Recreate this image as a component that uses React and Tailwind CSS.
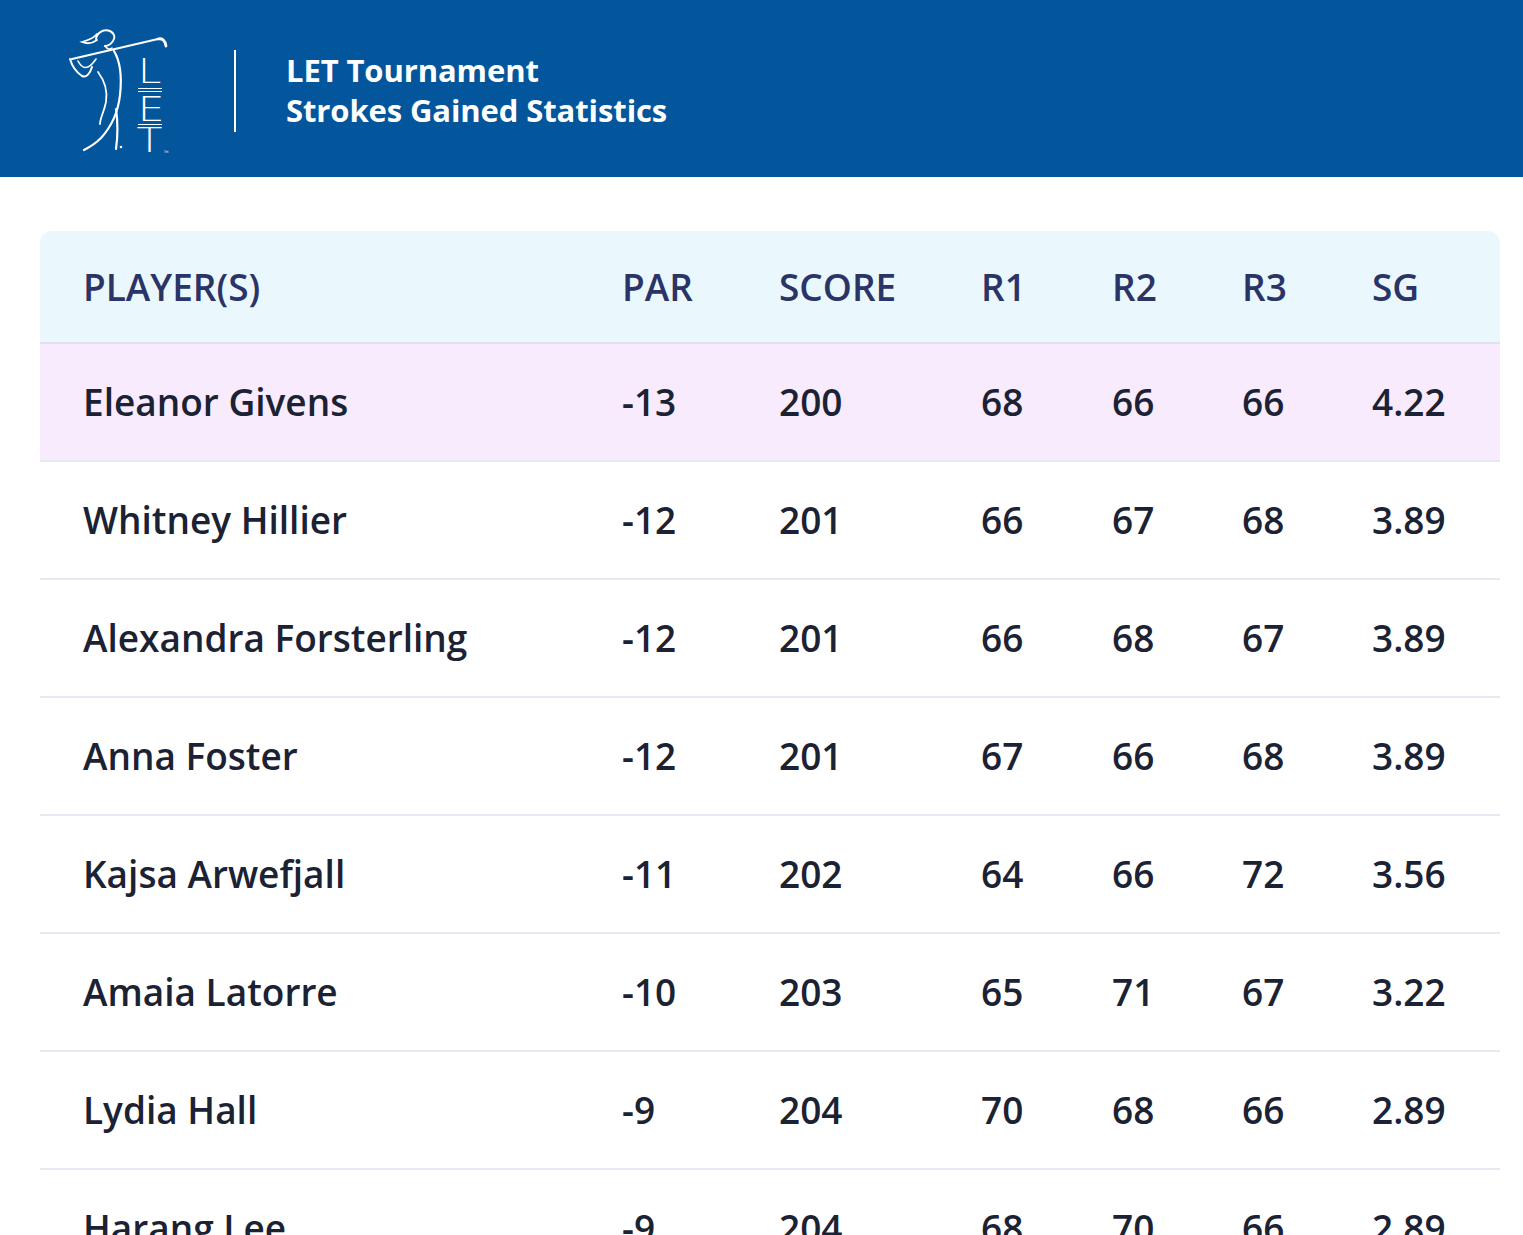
import React from "react";

const rows = [
  { name: "Eleanor Givens", par: "-13", score: 200, r1: 68, r2: 66, r3: 66, sg: "4.22", leader: true },
  { name: "Whitney Hillier", par: "-12", score: 201, r1: 66, r2: 67, r3: 68, sg: "3.89" },
  { name: "Alexandra Forsterling", par: "-12", score: 201, r1: 66, r2: 68, r3: 67, sg: "3.89" },
  { name: "Anna Foster", par: "-12", score: 201, r1: 67, r2: 66, r3: 68, sg: "3.89" },
  { name: "Kajsa Arwefjall", par: "-11", score: 202, r1: 64, r2: 66, r3: 72, sg: "3.56" },
  { name: "Amaia Latorre", par: "-10", score: 203, r1: 65, r2: 71, r3: 67, sg: "3.22" },
  { name: "Lydia Hall", par: "-9", score: 204, r1: 70, r2: 68, r3: 66, sg: "2.89" },
  { name: "Harang Lee", par: "-9", score: 204, r1: 68, r2: 70, r3: 66, sg: "2.89" },
];

const cols = "grid grid-cols-[539px_157px_202px_131px_130px_130px_1fr] items-center pl-[43px]";

// golfer + stacked L E T mark
const LetLogo = () => (
  <svg width="106" height="140" viewBox="0 0 106 140" fill="none" className="shrink-0">
    <path d="M6 34 L92 14" stroke="white" strokeWidth="2.2" strokeLinecap="round" />
    <path d="M92 14 C96 13 99 15 100 21" stroke="white" strokeWidth="2.8" strokeLinecap="round" />
    <path d="M30 14 C31 7 38 4 44 6 C48 8 50 12 47 16 C45 19 42 21 39 21" stroke="white" strokeWidth="2" strokeLinecap="round" />
    <path d="M31 9 C28 13 23 15 16 17 C21 19 27 18 31 15" stroke="white" strokeWidth="1.8" strokeLinecap="round" />
    <path d="M39 21 C41 24 44 25 46 23" stroke="white" strokeWidth="1.6" strokeLinecap="round" />
    <path d="M4 34 C6 41 10 47 16 51 C20 53 24 49 26 42" stroke="white" strokeWidth="2" strokeLinecap="round" />
    <path d="M12 36 C16 44 22 46 30 34" stroke="white" strokeWidth="1.6" strokeLinecap="round" />
    <path d="M48 26 C54 36 56 52 54 70 C52 88 45 102 35 113 C30 118 24 122 18 125" stroke="white" strokeWidth="2.2" strokeLinecap="round" />
    <path d="M32 47 C38 55 42 65 40 77 C38 87 34 93 34 99" stroke="white" strokeWidth="1.8" strokeLinecap="round" />
    <path d="M50 84 C52 98 52 110 50 124" stroke="white" strokeWidth="2.2" strokeLinecap="round" />
    <circle cx="55" cy="122" r="1.3" fill="white" />
    <g stroke="white" strokeWidth="1">
      <line x1="72" y1="63.5" x2="96" y2="63.5" />
      <line x1="72" y1="66.5" x2="96" y2="66.5" />
      <line x1="72" y1="99.5" x2="96" y2="99.5" />
    </g>
    <g fill="white" fontSize="34" style={{ fontFamily: "'DejaVu Sans', sans-serif", fontWeight: 200 }}>
      <text x="57.5" y="58" transform="scale(1.25 1)">L</text>
      <text x="57.5" y="96" transform="scale(1.25 1)">E</text>
      <text x="56.5" y="127" transform="scale(1.25 1)">T</text>
    </g>
    <text x="98" y="128" fill="white" fontSize="3" style={{ fontFamily: "'DejaVu Sans', sans-serif" }}>TM</text>
  </svg>
);

export default function App() {
  return (
    <div className="min-h-screen bg-white" style={{ fontFamily: "'Open Sans', 'Noto Sans', sans-serif" }}>
      <header className="h-[177px] bg-[#03569b] flex items-start pl-[66px]">
        <div className="mt-[25px] h-[140px]">
          <LetLogo />
        </div>
        <div className="ml-[62px] mt-[50px] w-[2px] h-[82px] bg-white" />
        <div className="ml-[50px] mt-[50px] text-white font-bold text-[31px] leading-[40px] tracking-[-0.1px]">
          <div>LET Tournament</div>
          <div>Strokes Gained Statistics</div>
        </div>
      </header>

      <div className="ml-[40px] mr-[23px] mt-[54px]">
        <div className={`${cols} h-[113px] bg-[#eaf8fe] rounded-t-[12px] border-b-2 border-[#dfe0f1] text-[#2b3466] font-semibold text-[37px]`}>
          <div>PLAYER(S)</div>
          <div>PAR</div>
          <div>SCORE</div>
          <div>R1</div>
          <div>R2</div>
          <div>R3</div>
          <div>SG</div>
        </div>
        {rows.map((r) => (
          <div
            key={r.name}
            className={`${cols} h-[118px] border-b-2 border-[#e6e9f1] text-[#1b2233] font-semibold text-[37px] ${
              r.leader ? "bg-[#f7ebfd]" : "bg-white"
            }`}
          >
            <div>{r.name}</div>
            <div>{r.par}</div>
            <div>{r.score}</div>
            <div>{r.r1}</div>
            <div>{r.r2}</div>
            <div>{r.r3}</div>
            <div>{r.sg}</div>
          </div>
        ))}
      </div>
    </div>
  );
}
